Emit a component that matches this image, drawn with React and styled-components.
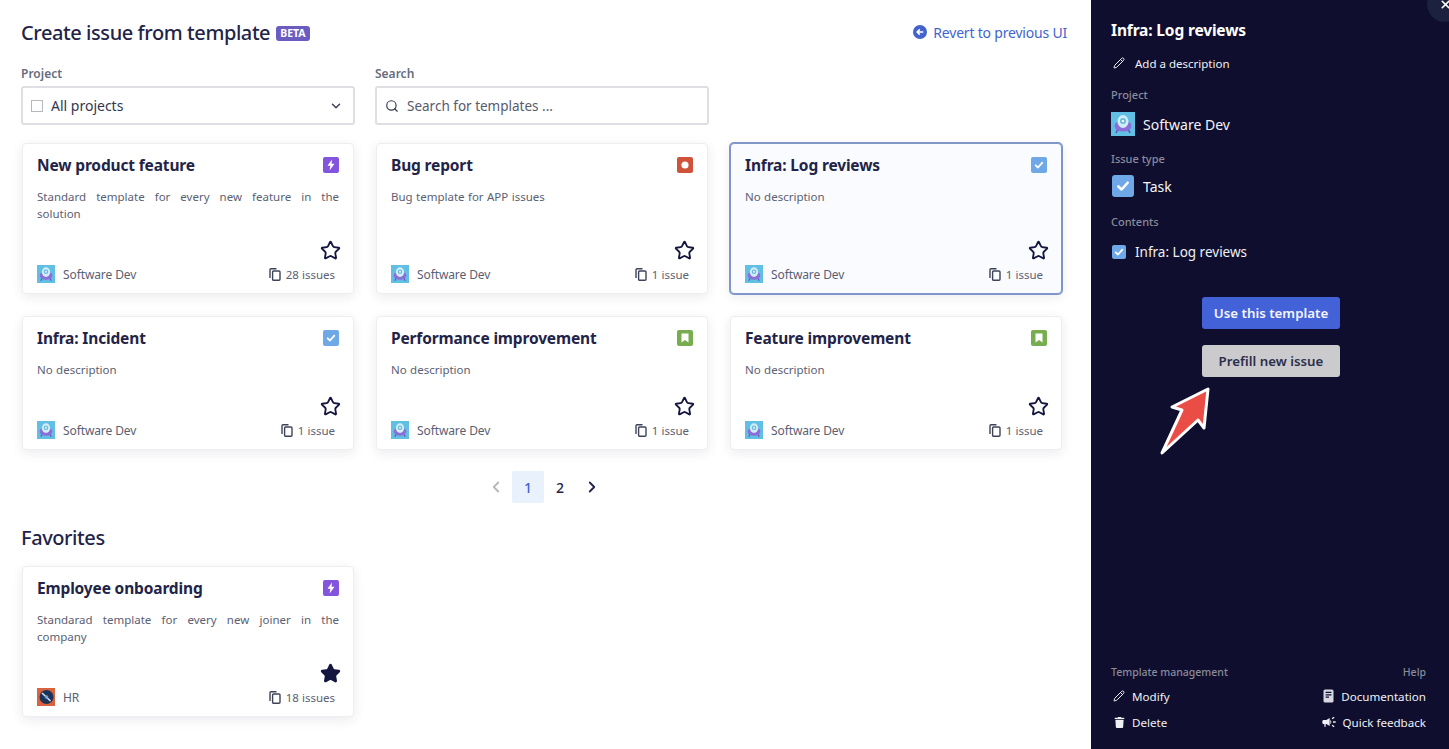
import React from 'react';
import styled, { createGlobalStyle } from 'styled-components';
import { Pencil, Star, Search, ChevronDown, ChevronLeft, ChevronRight, X } from 'lucide-react';
import { FaTrash } from 'react-icons/fa';
import { MdCampaign } from 'react-icons/md';

const GlobalStyle = createGlobalStyle`
  html, body { margin: 0; padding: 0; height: 100%; overflow: hidden; background: #fff; }
  body { font-family: "Noto Sans", "Open Sans", sans-serif; color: #1f2448; }
  * { box-sizing: border-box; }
`;

const Page = styled.div`
  display: flex;
  width: 1449px;
  height: 749px;
`;

const Main = styled.main`
  width: 1091px;
  flex: none;
  padding: 21px 29px 0 21px;
`;

const Header = styled.div`
  display: flex;
  align-items: center;
  justify-content: space-between;
  height: 24px;
  margin-right: -5px;
`;

const TitleRow = styled.div`
  display: flex;
  align-items: center;
  gap: 6px;
`;

const PageTitle = styled.h1`
  margin: 0;
  font-size: 20px;
  line-height: 24px;
  font-weight: 500;
  letter-spacing: -0.42px;
  color: #1f2448;
`;

const Beta = styled.span`
  background: #6a5cc0;
  color: #fff;
  font-size: 10.5px;
  font-weight: 700;
  line-height: 15px;
  padding: 0 4px;
  border-radius: 3px;
`;

const Revert = styled.a`
  display: flex;
  align-items: center;
  gap: 6px;
  padding-bottom: 2px;
  font-size: 14px;
  letter-spacing: -0.2px;
  color: #4263cf;
`;

const Filters = styled.div`
  display: grid;
  grid-template-columns: 334px 334px;
  gap: 20px;
  margin-top: 21px;
`;

const Field = styled.div`
  display: flex;
  flex-direction: column;
`;

const FieldLabel = styled.label`
  font-size: 12px;
  line-height: 16px;
  font-weight: 600;
  color: #676c7f;
  margin-bottom: 4px;
`;

const InputBox = styled.div`
  display: flex;
  align-items: center;
  height: 39px;
  padding: 0 10px 0 8px;
  border: 2px solid #dedfe2;
  border-radius: 3px;
  font-size: 14px;
  color: #32374f;
  background: #fff;
`;

const EmptyCheck = styled.span`
  width: 12px;
  height: 12px;
  border: 1px solid #b6b8c0;
  margin-right: 8px;
`;

const ProjectName = styled.span`
  flex: 1;
`;

const Placeholder = styled.span`
  font-size: 13.5px;
  color: #565b6e;
  margin-left: 8px;
`;

const Grid = styled.div`
  display: grid;
  grid-template-columns: repeat(3, 332px);
  column-gap: 22px;
  row-gap: 22px;
  margin-top: 18px;
  margin-left: 1px;
`;

const Card = styled.article`
  display: flex;
  flex-direction: column;
  padding: 11px 14px 9px;
  border: 1px solid ${p => (p.$selected ? '#7f97c8' : '#eeeef0')};
  box-shadow: ${p => (p.$selected ? '0 0 0 1px #7f97c8,' : '')} 0 3px 12px rgba(30, 35, 70, 0.09);
  border-radius: 4px;
  background: ${p => (p.$selected ? '#f9fbff' : '#fff')};
`;

const CardHead = styled.div`
  display: flex;
  align-items: center;
  justify-content: space-between;
  height: 20px;
`;

const CardTitle = styled.h3`
  margin: 0;
  font-size: 15.5px;
  line-height: 20px;
  font-weight: 700;
  letter-spacing: -0.15px;
  color: #1f2448;
`;

const TypeBadge = styled.span`
  display: flex;
  align-items: center;
  justify-content: center;
  width: 16px;
  height: 16px;
  border-radius: 2px;
  background: ${p => p.$color};
`;

const Description = styled.p`
  flex: 1;
  margin: 13px 0 0;
  font-size: 11.5px;
  line-height: 17px;
  word-spacing: 0.4px;
  color: #5b6073;
  text-align: justify;
`;

const StarRow = styled.div`
  display: flex;
  align-items: center;
  justify-content: flex-end;
  margin: 19px -2px 0 0;
  height: 18px;
`;

const CardFooter = styled.div`
  display: flex;
  align-items: center;
  justify-content: space-between;
  height: 20px;
  margin-top: 5px;
  padding-right: 4px;
  font-size: 11.5px;
  color: #5b6073;
`;

const Owner = styled.span`
  display: flex;
  align-items: center;
  gap: 8px;
  font-size: 12px;
  letter-spacing: -0.1px;
`;

const Count = styled.span`
  display: flex;
  align-items: center;
  gap: 5px;
`;

const Pagination = styled.nav`
  display: flex;
  justify-content: center;
  align-items: center;
  margin-top: 21px;
  margin-left: 5px;
`;

const PageCell = styled.span`
  display: flex;
  align-items: center;
  justify-content: center;
  width: 32px;
  height: 32px;
  border-radius: 2px;
  font-size: 14px;
  font-weight: 500;
  color: ${p => (p.$active ? '#4263cf' : '#1f2448')};
  background: ${p => (p.$active ? '#e9f1fd' : 'transparent')};
`;

const SectionTitle = styled.h2`
  margin: 22px 0 0;
  font-size: 20px;
  line-height: 26px;
  font-weight: 500;
  letter-spacing: -0.42px;
  color: #1f2448;
`;

const FavoriteGrid = styled(Grid)`
  margin-top: 15px;
`;

const Sidebar = styled.aside`
  position: relative;
  width: 358px;
  flex: none;
  height: 749px;
  display: flex;
  flex-direction: column;
  padding: 20px 23px 14px 20px;
  background: #0f0e2e;
  color: #fff;
  overflow: hidden;
`;

const CloseButton = styled.span`
  position: absolute;
  top: -14px;
  right: -14px;
  width: 36px;
  height: 36px;
  border-radius: 50%;
  background: #1c2140;
  color: #fff;
  display: flex;
  align-items: center;
  justify-content: center;
`;

const SideTitle = styled.h2`
  margin: 0;
  font-size: 15.5px;
  line-height: 20px;
  font-weight: 700;
  letter-spacing: -0.15px;
`;

const AddDescription = styled.div`
  display: flex;
  align-items: center;
  gap: 10px;
  height: 20px;
  margin-top: 13px;
  padding-left: 2px;
  font-size: 11.5px;
  color: #f0f0f4;
`;

const SideLabel = styled.div`
  font-size: 11px;
  line-height: 14px;
  font-weight: 500;
  color: #8a8b9b;
  margin-top: ${p => p.$top}px;
`;

const SideValue = styled.div`
  display: flex;
  align-items: center;
  gap: 8px;
  height: 24px;
  margin-top: ${p => p.$top}px;
  font-size: 14px;
  color: #f4f4f8;
`;

const TaskBox = styled.span`
  display: flex;
  align-items: center;
  justify-content: center;
  width: 22px;
  height: 22px;
  margin-left: 1px;
  margin-right: 1px;
  border-radius: 3px;
  background: #6fa8e6;
`;

const ContentRow = styled.div`
  display: flex;
  align-items: center;
  gap: 9px;
  height: 20px;
  margin-top: 13px;
  padding-left: 1px;
  font-size: 13.5px;
  color: #f0f0f4;
`;

const SmallCheck = styled.span`
  display: flex;
  align-items: center;
  justify-content: center;
  width: 14px;
  height: 14px;
  border-radius: 2px;
  background: #6fa8e6;
`;

const Actions = styled.div`
  display: flex;
  flex-direction: column;
  align-items: center;
  gap: 16px;
  margin-top: 35px;
  padding-left: 5px;
`;

const ActionButton = styled.button`
  width: 138px;
  height: 32px;
  border: 0;
  border-radius: 3px;
  font-family: inherit;
  font-size: 13.3px;
  font-weight: 600;
  background: ${p => (p.$primary ? '#4462d8' : '#cbcbcd')};
  color: ${p => (p.$primary ? '#f4f6ff' : '#2c2f4b')};
`;

const Arrow = styled.svg`
  position: absolute;
  left: 66px;
  top: 385px;
`;

const SideFooter = styled.div`
  display: flex;
  justify-content: space-between;
  margin-top: auto;
`;

const FooterColumn = styled.div`
  display: flex;
  flex-direction: column;
  align-items: ${p => (p.$right ? 'flex-end' : 'flex-start')};
`;

const FooterLabel = styled.div`
  font-size: 10.5px;
  line-height: 14px;
  font-weight: 500;
  color: #8a8b9b;
  margin-bottom: 4px;
`;

const FooterLink = styled.div`
  display: flex;
  align-items: center;
  gap: ${p => p.$gap || 7}px;
  height: 26px;
  font-size: 11.6px;
  color: #f0f0f4;
  padding-left: ${p => p.$inset || 0}px;
`;

const IconSlot = styled.span`
  display: flex;
  width: ${p => p.$w || 14}px;
  justify-content: center;
`;

const Check = ({ size = 10 }) => (
  <svg width={size} height={size} viewBox="0 0 12 12">
    <path d="M2 6.4 L4.8 9 L10 3.2" fill="none" stroke="#fff" strokeWidth="2.2" strokeLinecap="round" strokeLinejoin="round" />
  </svg>
);

const TypeIcon = ({ type }) => {
  if (type === 'feature') {
    return (
      <TypeBadge $color="#8255dc">
        <svg width="10" height="12" viewBox="0 0 10 12"><path d="M6 0.5 L1.5 6.8 H4.4 L3.6 11.5 L8.5 4.8 H5.5 Z" fill="#fff" /></svg>
      </TypeBadge>
    );
  }
  if (type === 'bug') {
    return (
      <TypeBadge $color="#cf533b">
        <svg width="8" height="8" viewBox="0 0 8 8"><circle cx="4" cy="4" r="3.6" fill="#fff" /></svg>
      </TypeBadge>
    );
  }
  if (type === 'story') {
    return (
      <TypeBadge $color="#77ad4e">
        <svg width="8" height="10" viewBox="0 0 8 10"><path d="M0.5 0.5 H7.5 V9.5 L4 7 L0.5 9.5 Z" fill="#fff" /></svg>
      </TypeBadge>
    );
  }
  return (
    <TypeBadge $color="#6fa8e6">
      <Check />
    </TypeBadge>
  );
};

const CopyIcon = () => (
  <svg width="12" height="13" viewBox="0 0 12 13" fill="none" stroke="#3e4358" strokeWidth="1.4">
    <rect x="3.6" y="3" width="7.4" height="9.2" rx="1" />
    <path d="M1 10 V1.8 C1 1.2 1.4 0.8 2 0.8 H7.5" />
  </svg>
);

const ProjectAvatar = ({ size = 18 }) => (
  <svg width={size} height={size} viewBox="0 0 24 24">
    <rect width="24" height="24" fill="#62bfe4" />
    <path d="M5 21 L6.5 18 H17.5 L19 21" stroke="#6b51b8" strokeWidth="1.6" fill="none" />
    <ellipse cx="12" cy="14" rx="8.5" ry="5.5" fill="#8b6ed8" />
    <ellipse cx="12" cy="9.5" rx="5.5" ry="6.5" fill="#cfeef8" />
    <circle cx="12" cy="9" r="3" fill="#6fb7da" />
    <circle cx="12" cy="9" r="1.3" fill="#e8f7fb" />
  </svg>
);

const HrAvatar = () => (
  <svg width="18" height="18" viewBox="0 0 18 18">
    <rect width="18" height="18" fill="#d8633c" />
    <circle cx="9.5" cy="9" r="7" fill="#1f3358" />
    <path d="M5 5 L13.5 13" stroke="#d5e6f5" strokeWidth="1.6" />
    <circle cx="9.5" cy="9" r="1.8" fill="#6ea8dc" />
  </svg>
);

const DocIcon = () => (
  <svg width="11" height="14" viewBox="0 0 11 14">
    <rect x="0.5" y="0.5" width="10" height="13" rx="1.6" fill="#d8d8e2" />
    <path d="M2.6 3.4 H8.4 M2.6 5.8 H8.4 M2.6 8.2 H6" stroke="#0f0e2e" strokeWidth="1.2" />
  </svg>
);

const RevertIcon = () => (
  <svg width="14" height="14" viewBox="0 0 14 14">
    <circle cx="7" cy="7" r="7" fill="#4263cf" />
    <path d="M10.3 7 H4.4 M6.8 4.4 L4.2 7 L6.8 9.6" stroke="#fff" strokeWidth="1.6" fill="none" />
  </svg>
);

const templates = [
  { title: 'New product feature', desc: 'Standard template for every new feature in the solution', type: 'feature', count: '28 issues' },
  { title: 'Bug report', desc: 'Bug template for APP issues', type: 'bug', count: '1 issue' },
  { title: 'Infra: Log reviews', desc: 'No description', type: 'task', count: '1 issue', selected: true },
  { title: 'Infra: Incident', desc: 'No description', type: 'task', count: '1 issue' },
  { title: 'Performance improvement', desc: 'No description', type: 'story', count: '1 issue' },
  { title: 'Feature improvement', desc: 'No description', type: 'story', count: '1 issue' },
];

const TemplateCard = ({ item }) => (
  <Card $selected={item.selected}>
    <CardHead>
      <CardTitle>{item.title}</CardTitle>
      <TypeIcon type={item.type} />
    </CardHead>
    <Description>{item.desc}</Description>
    <StarRow>
      <Star size={21} color="#14163f" strokeWidth={2.1} fill={item.favorite ? '#14163f' : 'none'} />
    </StarRow>
    <CardFooter>
      <Owner>
        {item.hr ? <HrAvatar /> : <ProjectAvatar />}
        {item.hr ? 'HR' : 'Software Dev'}
      </Owner>
      <Count>
        <CopyIcon />
        {item.count}
      </Count>
    </CardFooter>
  </Card>
);

export default function App() {
  return (
    <Page>
      <GlobalStyle />
      <Main>
        <Header>
          <TitleRow>
            <PageTitle>Create issue from template</PageTitle>
            <Beta>BETA</Beta>
          </TitleRow>
          <Revert>
            <RevertIcon />
            Revert to previous UI
          </Revert>
        </Header>

        <Filters>
          <Field>
            <FieldLabel>Project</FieldLabel>
            <InputBox>
              <EmptyCheck />
              <ProjectName>All projects</ProjectName>
              <ChevronDown size={14} color="#3e4358" strokeWidth={2.5} />
            </InputBox>
          </Field>
          <Field>
            <FieldLabel>Search</FieldLabel>
            <InputBox>
              <Search size={14} color="#32374f" strokeWidth={2} />
              <Placeholder>Search for templates ...</Placeholder>
            </InputBox>
          </Field>
        </Filters>

        <Grid>
          {templates.map(item => <TemplateCard key={item.title} item={item} />)}
        </Grid>

        <Pagination>
          <PageCell><ChevronLeft size={18} color="#b4b6be" strokeWidth={2.4} /></PageCell>
          <PageCell $active>1</PageCell>
          <PageCell>2</PageCell>
          <PageCell><ChevronRight size={18} color="#1f2448" strokeWidth={2.4} /></PageCell>
        </Pagination>

        <SectionTitle>Favorites</SectionTitle>
        <FavoriteGrid>
          <TemplateCard
            item={{
              title: 'Employee onboarding',
              desc: 'Standarad template for every new joiner in the company',
              type: 'feature',
              count: '18 issues',
              favorite: true,
              hr: true,
            }}
          />
        </FavoriteGrid>
      </Main>

      <Sidebar>
        <CloseButton><X size={13} strokeWidth={3} /></CloseButton>
        <SideTitle>Infra: Log reviews</SideTitle>
        <AddDescription>
          <Pencil size={12} />
          Add a description
        </AddDescription>
        <SideLabel $top={15}>Project</SideLabel>
        <SideValue $top={10}>
          <ProjectAvatar size={24} />
          Software Dev
        </SideValue>
        <SideLabel $top={16}>Issue type</SideLabel>
        <SideValue $top={8}>
          <TaskBox><Check size={14} /></TaskBox>
          Task
        </SideValue>
        <SideLabel $top={17}>Contents</SideLabel>
        <ContentRow>
          <SmallCheck><Check /></SmallCheck>
          Infra: Log reviews
        </ContentRow>

        <Actions>
          <ActionButton $primary>Use this template</ActionButton>
          <ActionButton>Prefill new issue</ActionButton>
        </Actions>

        <Arrow width="54" height="72" viewBox="0 0 54 72">
          <path
            d="M5 68 L25 25 L15 22 L51 4 L47 43 L41 35 Z"
            fill="#ea4d45"
            stroke="#fff"
            strokeWidth="3"
            strokeLinejoin="round"
          />
        </Arrow>

        <SideFooter>
          <FooterColumn>
            <FooterLabel>Template management</FooterLabel>
            <FooterLink $inset={2}><Pencil size={12} />Modify</FooterLink>
            <FooterLink $inset={2}><IconSlot $w={12}><FaTrash size={11} /></IconSlot>Delete</FooterLink>
          </FooterColumn>
          <FooterColumn $right>
            <FooterLabel>Help</FooterLabel>
            <FooterLink $gap={7}><DocIcon />Documentation</FooterLink>
            <FooterLink $gap={5}><MdCampaign size={16} />Quick feedback</FooterLink>
          </FooterColumn>
        </SideFooter>
      </Sidebar>
    </Page>
  );
}
